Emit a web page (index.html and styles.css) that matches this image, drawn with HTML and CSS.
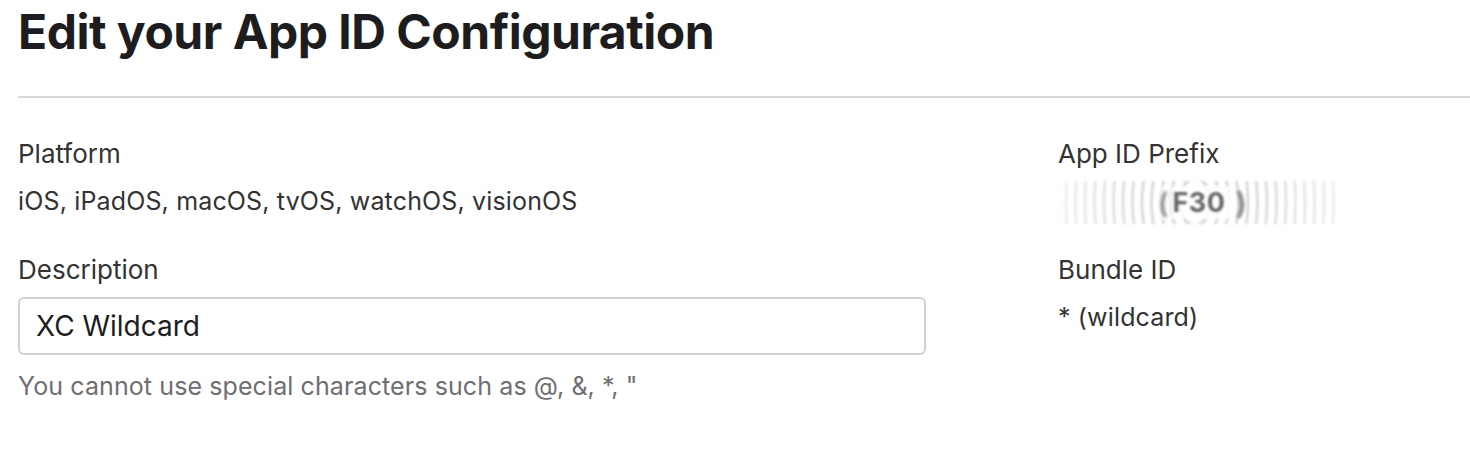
FILE: index.html
```html
<!DOCTYPE html>
<html lang="en">
<head>
<meta charset="utf-8">
<title>Edit your App ID Configuration</title>
<link rel="stylesheet" href="styles.css">
</head>
<body>
<main class="page">
  <h1 class="title">Edit your App ID Configuration</h1>
  <hr class="divider">
  <section class="config">
    <div class="field">
      <div class="label">Platform</div>
      <div class="value">iOS, iPadOS, macOS, tvOS, watchOS, visionOS</div>
    </div>
    <div class="field">
      <div class="label">App ID Prefix</div>
      <div class="redacted">
        <span class="redacted-open">(</span><span class="redacted-core">F30</span><span class="redacted-paren">)</span>
      </div>
    </div>
    <div class="field">
      <div class="label">Description</div>
      <input class="input" type="text" value="XC Wildcard">
      <div class="help">You cannot use special characters such as @, &amp;, *, "</div>
    </div>
    <div class="field">
      <div class="label">Bundle ID</div>
      <div class="value">* (wildcard)</div>
    </div>
  </section>
</main>
</body>
</html>
```

FILE: styles.css
```css
html, body {
  margin: 0;
  padding: 0;
  background: #ffffff;
}

body {
  font-family: Inter, "Noto Sans", "Liberation Sans", sans-serif;
  color: #333333;
}

.page {
  padding-left: 18px;
}

.title {
  margin: 0;
  padding-top: 3px;
  font-size: 48px;
  line-height: 58px;
  font-weight: 700;
  color: #1d1d1f;
  letter-spacing: -0.5px;
}

.divider {
  margin: 35px 0 0 0;
  border: 0;
  height: 2px;
  background: #dadada;
}

.config {
  display: grid;
  grid-template-columns: 908px 1fr;
  column-gap: 132px;
  row-gap: 30px;
  padding-top: 40px;
}

.field {
  display: flex;
  flex-direction: column;
  align-items: flex-start;
}

.label {
  font-size: 26px;
  line-height: 32px;
  color: #333333;
}

.value {
  font-size: 25px;
  line-height: 32px;
  letter-spacing: 0.15px;
  margin-top: 15px;
  color: #333333;
}

.input {
  box-sizing: border-box;
  width: 908px;
  height: 58px;
  margin-top: 11px;
  padding: 0 16px;
  border: 2px solid #d2d2d2;
  border-radius: 6px;
  font-family: Inter, "Noto Sans", "Liberation Sans", sans-serif;
  font-size: 28px;
  color: #1d1d1f;
  background: #ffffff;
  outline: none;
}

.help {
  margin-top: 15px;
  font-size: 25px;
  line-height: 32px;
  letter-spacing: 0.1px;
  color: #6e6e73;
}

.redacted {
  margin-top: 11px;
  box-sizing: border-box;
  width: 278px;
  height: 43px;
  padding-left: 98px;
  display: flex;
  align-items: center;
  white-space: nowrap;
  background:
    linear-gradient(90deg, rgba(255,255,255,0.6) 0%, rgba(255,255,255,0) 30%, rgba(255,255,255,0) 70%, rgba(255,255,255,0.55) 100%),
    linear-gradient(90deg, rgba(255,255,255,0) 0px, rgba(255,255,255,0) 238px, #ffffff 239px, #ffffff 244px, rgba(255,255,255,0) 245px),
    repeating-radial-gradient(ellipse 40px 64px at 137px 21px,
      rgba(255,255,255,0) 0px,
      rgba(255,255,255,0) 3.5px,
      rgba(130,130,130,0.42) 5.5px,
      rgba(255,255,255,0) 7.5px,
      rgba(255,255,255,0) 9.5px);
  filter: blur(0.9px);
}

.redacted-open {
  font-size: 28px;
  font-weight: 600;
  color: #8a8a8a;
  filter: blur(1px);
  padding: 0 4px 0 2px;
  background: rgba(255,255,255,0.6);
}

.redacted-core {
  font-size: 27px;
  font-weight: 700;
  letter-spacing: 0.5px;
  color: #666666;
  background: rgba(255,255,255,0.85);
  padding-right: 10px;
  filter: blur(0.7px);
}

.redacted-paren {
  font-size: 30px;
  font-weight: 600;
  color: #7a7a7a;
  filter: blur(1px);
}
```
